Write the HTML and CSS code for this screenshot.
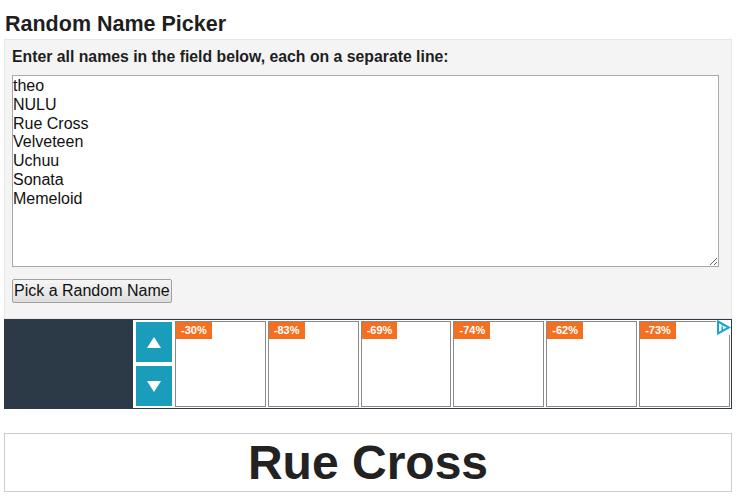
FILE: index.html
```html
<!DOCTYPE html>
<html>
<head>
<meta charset="utf-8">
<title>Random Name Picker</title>
<link rel="stylesheet" href="styles.css">
</head>
<body>
<div class="page">
  <h1 class="title">Random Name Picker</h1>
  <div class="panel">
    <label class="label" for="names">Enter all names in the field below, each on a separate line:</label>
    <textarea id="names" class="names">theo
NULU
Rue Cross
Velveteen
Uchuu
Sonata
Memeloid</textarea>
    <button class="pick">Pick a Random Name</button>
  </div>
  <div class="ad">
    <div class="ad-side"></div>
    <div class="ad-inner">
      <div class="ad-nav">
        <div class="nav-btn"><span class="tri-up"></span></div>
        <div class="nav-btn"><span class="tri-down"></span></div>
      </div>
      <div class="ad-items">
        <div class="item"><span class="badge">-30%</span></div>
        <div class="item"><span class="badge">-83%</span></div>
        <div class="item"><span class="badge">-69%</span></div>
        <div class="item"><span class="badge">-74%</span></div>
        <div class="item"><span class="badge">-62%</span></div>
        <div class="item"><span class="badge">-73%</span></div>
      </div>
    </div>
    <svg class="adchoices" width="15" height="15" viewBox="0 0 15 15">
      <path d="M2 1.5 L13 7.5 L2 13.5 Z" fill="none" stroke="#1aa6cf" stroke-width="2" stroke-linejoin="miter"/>
      <rect x="5.5" y="6.5" width="1.6" height="4" fill="#1aa6cf"/>
      <rect x="5.5" y="4.2" width="1.6" height="1.5" fill="#1aa6cf"/>
    </svg>
  </div>
  <div class="result">Rue Cross</div>
</div>
</body>
</html>
```

FILE: styles.css
```css
html, body {
  margin: 0;
  padding: 0;
  background: #ffffff;
}

body {
  font-family: "Liberation Sans", Arial, sans-serif;
  color: #222222;
}

.page {
  width: 728px;
  padding: 12px 0 0 4px;
}

.title {
  margin: 0 0 2px 1px;
  font-size: 21.5px;
  line-height: 25px;
  font-weight: bold;
  color: #1e1e1e;
}

.panel {
  background: #f4f4f4;
  border: 1px solid #e6e6e6;
  padding: 8px 12px 15px 7px;
  display: flex;
  flex-direction: column;
  align-items: flex-start;
}

.label {
  font-size: 15.8px;
  line-height: 17px;
  font-weight: bold;
  color: #1e1e1e;
  margin-bottom: 10px;
}

.names {
  box-sizing: border-box;
  width: 707px;
  height: 192px;
  margin: 0;
  padding: 1px 0 0 0;
  border: 1px solid #a9a9a9;
  background: #ffffff;
  font-family: "Liberation Sans", Arial, sans-serif;
  font-size: 16px;
  line-height: 18.8px;
  color: #111111;
  resize: both;
}

.pick {
  margin-top: 12px;
  height: 24px;
  padding: 0 1px;
  font-family: "Liberation Sans", Arial, sans-serif;
  font-size: 16px;
  color: #111111;
  border: 1px solid #a0a0a0;
  border-radius: 2px;
  background: linear-gradient(#f6f6f6, #dedede);
}

.ad {
  position: relative;
  display: flex;
  height: 90px;
  background: #2b3a46;
}

.ad-side {
  width: 129px;
  flex: none;
}

.ad-inner {
  flex: 1;
  display: flex;
  margin: 1px 1px 1px 0;
  padding: 1px 1px 1px 3px;
  background: #ffffff;
  gap: 3px;
}

.ad-nav {
  display: flex;
  flex-direction: column;
  gap: 4px;
  padding-top: 1px;
  padding-bottom: 1px;
}

.nav-btn {
  width: 36px;
  flex: 1;
  background: #1a9dbb;
  display: flex;
  align-items: center;
  justify-content: center;
}

.tri-up {
  width: 0;
  height: 0;
  border-left: 7px solid transparent;
  border-right: 7px solid transparent;
  border-bottom: 11px solid #ffffff;
}

.tri-down {
  width: 0;
  height: 0;
  border-left: 7px solid transparent;
  border-right: 7px solid transparent;
  border-top: 11px solid #ffffff;
}

.ad-items {
  flex: 1;
  display: flex;
  gap: 2px;
}

.item {
  flex: 1;
  border: 1px solid #8a8a8a;
  background: #ffffff;
  display: flex;
  align-items: flex-start;
}

.badge {
  background: #f37021;
  color: #ffffff;
  font-size: 11px;
  font-weight: bold;
  line-height: 17px;
  height: 17px;
  padding: 0 5px;
}

.adchoices {
  position: absolute;
  top: 1px;
  right: 1px;
  background: #ffffff;
}

.result {
  margin-top: 24px;
  border: 1px solid #cccccc;
  text-align: center;
  font-size: 48px;
  font-weight: bold;
  line-height: 57px;
  color: #222222;
}
```
